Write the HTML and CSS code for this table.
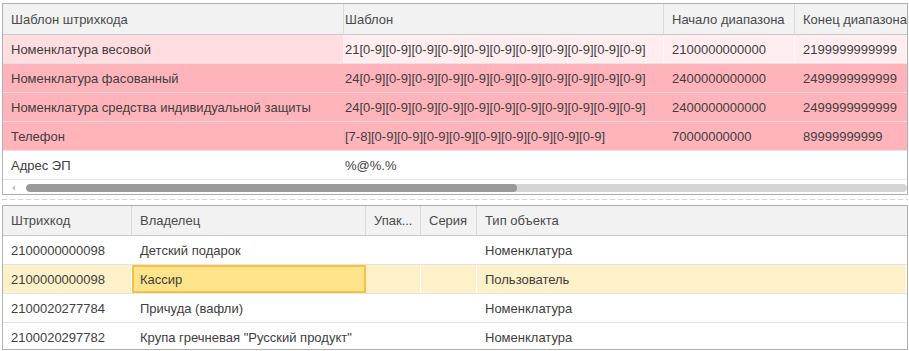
FILE: index.html
```html
<!DOCTYPE html>
<html lang="ru">
<head>
<meta charset="utf-8">
<title>Шаблоны штрихкодов</title>
<link rel="stylesheet" href="styles.css">
</head>
<body>
<div class="page">
  <div class="grid top">
    <div class="row head">
      <div class="cell">Шаблон штрихкода</div>
      <div class="cell tight">Шаблон</div>
      <div class="cell">Начало диапазона</div>
      <div class="cell">Конец диапазона</div>
    </div>
    <div class="row light">
      <div class="cell current">Номенклатура весовой</div>
      <div class="cell tight">21[0-9][0-9][0-9][0-9][0-9][0-9][0-9][0-9][0-9][0-9][0-9]</div>
      <div class="cell">2100000000000</div>
      <div class="cell">2199999999999</div>
    </div>
    <div class="row pink">
      <div class="cell">Номенклатура фасованный</div>
      <div class="cell tight">24[0-9][0-9][0-9][0-9][0-9][0-9][0-9][0-9][0-9][0-9][0-9]</div>
      <div class="cell">2400000000000</div>
      <div class="cell">2499999999999</div>
    </div>
    <div class="row pink">
      <div class="cell">Номенклатура средства индивидуальной защиты</div>
      <div class="cell tight">24[0-9][0-9][0-9][0-9][0-9][0-9][0-9][0-9][0-9][0-9][0-9]</div>
      <div class="cell">2400000000000</div>
      <div class="cell">2499999999999</div>
    </div>
    <div class="row pink">
      <div class="cell">Телефон</div>
      <div class="cell tight">[7-8][0-9][0-9][0-9][0-9][0-9][0-9][0-9][0-9][0-9]</div>
      <div class="cell">70000000000</div>
      <div class="cell">89999999999</div>
    </div>
    <div class="row">
      <div class="cell">Адрес ЭП</div>
      <div class="cell tight">%@%.%</div>
      <div class="cell"></div>
      <div class="cell"></div>
    </div>
    <div class="hscroll">
      <span class="arrow"></span>
      <div class="track"><div class="thumb"></div></div>
    </div>
  </div>

  <div class="splitter"><div class="dash"></div></div>

  <div class="grid bottom">
    <div class="row head">
      <div class="cell">Штрихкод</div>
      <div class="cell">Владелец</div>
      <div class="cell">Упак...</div>
      <div class="cell">Серия</div>
      <div class="cell">Тип объекта</div>
    </div>
    <div class="row">
      <div class="cell">2100000000098</div>
      <div class="cell">Детский подарок</div>
      <div class="cell"></div>
      <div class="cell"></div>
      <div class="cell">Номенклатура</div>
    </div>
    <div class="row selected">
      <div class="cell">2100000000098</div>
      <div class="cell focus">Кассир</div>
      <div class="cell"></div>
      <div class="cell"></div>
      <div class="cell">Пользователь</div>
    </div>
    <div class="row">
      <div class="cell">2100020277784</div>
      <div class="cell">Причуда (вафли)</div>
      <div class="cell"></div>
      <div class="cell"></div>
      <div class="cell">Номенклатура</div>
    </div>
    <div class="row">
      <div class="cell">2100020297782</div>
      <div class="cell">Крупа гречневая "Русский продукт"</div>
      <div class="cell"></div>
      <div class="cell"></div>
      <div class="cell">Номенклатура</div>
    </div>
  </div>
</div>
</body>
</html>
```
FILE: styles.css
```css
* { box-sizing: border-box; }
html, body {
  margin: 0;
  padding: 0;
  background: #ffffff;
}
body {
  font-family: "Liberation Sans", Arial, sans-serif;
  font-size: 13px;
  color: #404040;
}
.page {
  width: 909px;
  height: 351px;
  padding: 3px 1px 0 2px;
  overflow: hidden;
  display: flex;
  flex-direction: column;
}
.grid {
  border: 1px solid #b1b1b1;
  overflow: hidden;
  display: flex;
  flex-direction: column;
  background: #fff;
}
.grid.top { height: 192px; }
.grid.bottom { height: 145px; }

.row {
  display: grid;
  height: 29px;
  flex: 0 0 auto;
  border-bottom: 1px solid #e4e4e4;
}
.top .row { grid-template-columns: 341px 320px 131px 112px; }
.bottom .row { grid-template-columns: 129px 234px 55px 56px 430px; }

.row.head {
  background: #f2f2f2;
  border-bottom: 1px solid #c9c9c9;
}
.top .row.head { height: 31px; }
.bottom .row.head { height: 30px; }

.cell {
  display: flex;
  align-items: center;
  padding-left: 8px;
  white-space: nowrap;
  overflow: hidden;
  border-right: 1px solid transparent;
}
.cell.tight { padding-left: 1px; }
.head .cell {
  border-right: 1px solid #dadada;
  color: #4a4a4a;
}
.head .cell:last-child { border-right: none; }

.row.light { background: #ffedef; }
.row.light .cell { border-right-color: #fff6f7; }
.row.light .cell.current { background: #ffdde0; }
.row.pink { background: #ffb4bc; border-bottom-color: #f5dcdf; }

.row.selected { background: #fdf1c9; }
.row.selected .cell { border-right-color: #ffffff; }
.row.selected .cell.focus {
  background: #fde48a;
  border: 2px solid #f6c244;
  padding-left: 6px;
}

.hscroll {
  height: 14px;
  display: flex;
  align-items: center;
  padding-left: 9px;
}
.arrow {
  width: 0;
  height: 0;
  border-top: 3px solid transparent;
  border-bottom: 3px solid transparent;
  border-right: 3px solid #c4c4c4;
  margin-right: 11px;
  margin-top: 1px;
}
.track {
  flex: 1;
  height: 8px;
  margin-top: 1px;
  background: #d5d5d5;
  border-radius: 4px;
  overflow: hidden;
}
.thumb {
  width: 491px;
  height: 100%;
  background: #9a9a9a;
  border-radius: 4px;
}

.splitter {
  height: 10px;
  display: flex;
  align-items: center;
}
.dash {
  width: 100%;
  height: 1px;
  margin-top: -1px;
  background: repeating-linear-gradient(to right, #d2d2d2 0 5px, transparent 5px 8px);
}
```
